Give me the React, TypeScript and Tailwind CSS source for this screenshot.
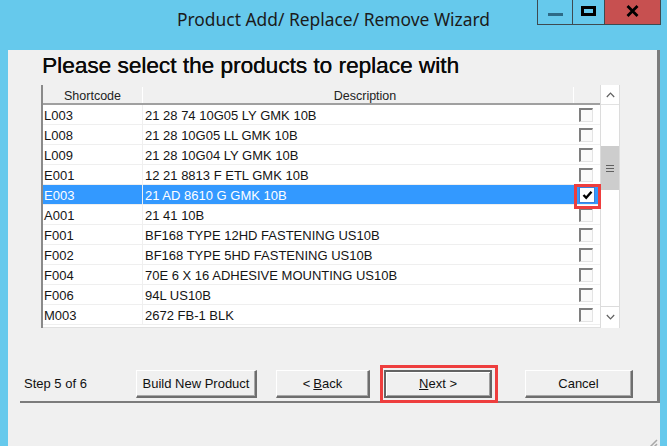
import React from "react";

const rows: [string, string][] = [
  ["L003", "21 28 74 10G05 LY GMK 10B"],
  ["L008", "21 28 10G05 LL GMK 10B"],
  ["L009", "21 28 10G04 LY GMK 10B"],
  ["E001", "12 21 8813 F ETL GMK 10B"],
  ["E003", "21 AD 8610 G GMK 10B"],
  ["A001", "21 41 10B"],
  ["F001", "BF168 TYPE 12HD FASTENING US10B"],
  ["F002", "BF168 TYPE 5HD FASTENING US10B"],
  ["F004", "70E 6 X 16 ADHESIVE MOUNTING US10B"],
  ["F006", "94L US10B"],
  ["M003", "2672 FB-1 BLK"],
];

const SELECTED = 4;

function CheckBox({ checked }: { checked: boolean }) {
  if (checked) {
    return (
      <div className="relative">
        <div className="w-[16px] h-[16px] border border-[#3b7fd9] bg-white flex items-center justify-center">
          <svg width="11" height="10" viewBox="0 0 11 10">
            <path d="M1.5 5 L4.2 7.8 L9.5 1.8" fill="none" stroke="#000" strokeWidth="2.4" />
          </svg>
        </div>
        {/* annotation */}
        <div className="absolute left-[-5px] top-[-3px] w-[27px] h-[25px] border-[3px] border-[#ee3e3e]" />
      </div>
    );
  }
  return (
    <div className="w-[14px] h-[14px] bg-[#fafafa] border-t-2 border-l-2 border-t-[#7e7e7e] border-l-[#7e7e7e] border-r border-b border-r-[#e4e4e4] border-b-[#e4e4e4]" />
  );
}

function Button({
  children,
  width,
  className = "",
  isDefault = false,
}: {
  children: React.ReactNode;
  width: string;
  className?: string;
  isDefault?: boolean;
}) {
  return (
    <div
      className={`${width} ${className} h-[28px] flex items-center justify-center bg-[#f0f0f0] text-[13px] text-[#111] ${
        isDefault
          ? "border-2 border-[#646464] shadow-[inset_1px_1px_0_#ffffff,inset_-1px_-1px_0_#a0a0a0]"
          : "border-t border-l border-t-white border-l-white border-r-2 border-b-2 border-r-[#6e6e6e] border-b-[#6e6e6e] shadow-[inset_-1px_-1px_0_#a8a8a8]"
      }`}
    >
      {children}
    </div>
  );
}

function ScrollBar() {
  return (
    <div className="w-[20px] h-full flex flex-col bg-white border-l border-r border-[#dcdcdc]">
      <div className="h-[20px] flex items-center justify-center border-b border-[#e2e2e2]">
        <svg width="9" height="6" viewBox="0 0 9 6">
          <path d="M0.8 5 L4.5 1.2 L8.2 5" fill="none" stroke="#606060" strokeWidth="1.2" />
        </svg>
      </div>
      <div className="mt-[41px] h-[44px] bg-[#cdcdcd] flex flex-col items-center justify-center gap-[2px]">
        <div className="w-[8px] h-[1px] bg-[#606060]" />
        <div className="w-[8px] h-[1px] bg-[#606060]" />
        <div className="w-[8px] h-[1px] bg-[#606060]" />
      </div>
      <div className="flex-1" />
      <div className="h-[21px] flex items-center justify-center border-t border-[#dcdcdc] mb-[1px]">
        <svg width="9" height="6" viewBox="0 0 9 6">
          <path d="M0.8 1 L4.5 4.8 L8.2 1" fill="none" stroke="#606060" strokeWidth="1.2" />
        </svg>
      </div>
    </div>
  );
}

export default function App() {
  return (
    <div
      className="w-[667px] h-[446px] bg-[#66c9ec] overflow-hidden relative"
      style={{ fontFamily: '"Liberation Sans", Arial, sans-serif' }}
    >
      {/* Title bar */}
      <div className="h-[36px] flex items-start justify-center pt-[7px]">
        <span className="text-[17.4px] leading-[24px] text-[#1b1b1b]" style={{ fontFamily: '"Noto Sans", sans-serif' }}>
          Product Add/ Replace/ Remove Wizard
        </span>
      </div>
      <div className="absolute top-0 left-[537px] h-[25px] flex border border-t-0 border-[#3e4a50]">
        <div className="w-[34px] flex items-center justify-center">
          <div className="w-[15px] h-[3px] mt-[5px] bg-[#2d6a86]" />
        </div>
        <div className="w-[32px] flex items-center justify-center border-l border-[#3e4a50]">
          <div className="w-[15px] h-[10px] border-[3px] border-black mt-[-2px]" />
        </div>
        <div className="w-[56px] flex items-center justify-center bg-[#c75050] border-l border-[#3e4a50]">
          <svg width="13" height="12" viewBox="0 0 13 12" className="mt-[-2px]">
            <path d="M1.5 1 L11.5 11 M11.5 1 L1.5 11" stroke="#000" strokeWidth="2.8" />
          </svg>
        </div>
      </div>

      {/* Client area */}
      <div className="ml-[8px] w-[652px] h-[401px] bg-[#f0f0f0] relative">
        <div className="ml-[12px] mt-[14px] w-[640px] h-[353px] border-r-[3px] border-b-2 border-[#7c7c7c] flex flex-col">
          <div className="pl-[22px] pt-[3px] text-[22.6px] leading-[26px] text-[#0a0a0a] [text-shadow:0.3px_0_0_#0a0a0a]">
            Please select the products to replace with
          </div>

          {/* Grid */}
          <div className="mt-[6px] ml-[21px] w-[579px] h-[243px] flex border-l-2 border-[#8a8a8a] bg-white">
            <div className="w-[557px] flex flex-col">
              <div className="h-[20px] flex bg-[#f0f0f0] border-b-2 border-[#a0a0a0] text-[12.5px] leading-[18px] pt-[2px] text-[#222]">
                <div className="w-[100px] text-center border-r border-white">Shortcode</div>
                <div className="w-[431px] text-center border-r border-white pl-[14px]">Description</div>
                <div className="flex-1" />
              </div>
              {rows.map(([code, desc], i) => {
                const sel = i === SELECTED;
                return (
                  <div
                    key={code}
                    className={`h-[20px] flex items-center text-[13px] border-b border-[#efefef] ${
                      sel ? "bg-[#3399ff] text-white" : "text-[#151515]"
                    }`}
                  >
                    <div className="w-[100px] pl-[1px] pt-[3px] border-r border-[#efefef] h-full flex items-center">{code}</div>
                    <div className="w-[431px] pl-[2px] pt-[3px] h-full flex items-center">{desc}</div>
                    <div className="flex-1 h-full flex items-center pl-[5px] pt-[1px]">
                      <CheckBox checked={sel} />
                    </div>
                  </div>
                );
              })}
              <div className="flex-1 border-b border-[#e0e0e0]" />
            </div>
            <ScrollBar />
          </div>

          {/* Footer */}
          <div className="mt-[42px] h-[28px] flex items-center">
            <div className="w-[116px] pl-[4px] text-[13px] text-[#111]">Step 5 of 6</div>
            <Button width="w-[121px]">Build New Product</Button>
            <Button width="w-[94px]" className="ml-[19px]">
              &lt; <span className="underline ml-[3px]">B</span>ack
            </Button>
            <div className="relative ml-[14px]">
              <Button width="w-[108px]" isDefault>
                <span className="underline">N</span>ext &gt;
              </Button>
              <div className="absolute left-[-4px] top-[-5px] w-[118px] h-[38px] border-[3px] border-[#ee3e3e]" />
            </div>
            <Button width="w-[108px]" className="ml-[33px]">Cancel</Button>
          </div>
        </div>

        {/* Resize grip */}
        <svg className="absolute right-[2px] bottom-[1px]" width="12" height="12" viewBox="0 0 12 12">
          <path d="M11 2 L2 11 M11 6 L6 11 M11 10 L10 11" stroke="#a8a8a8" strokeWidth="1.5" />
        </svg>
      </div>
    </div>
  );
}
